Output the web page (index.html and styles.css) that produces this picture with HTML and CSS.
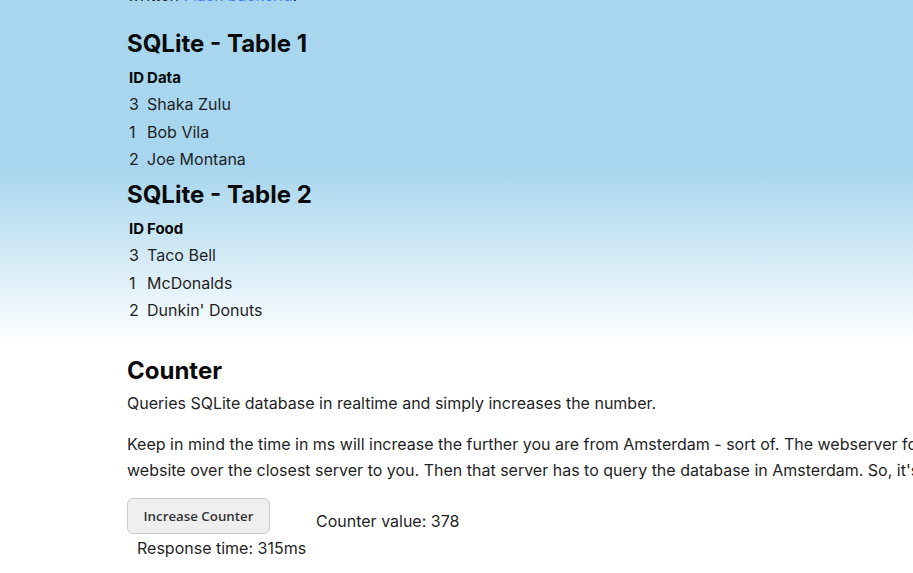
FILE: index.html
```html
<!DOCTYPE html>
<html lang="en">
<head>
<meta charset="utf-8">
<title>SQLite demo</title>
<link rel="stylesheet" href="styles.css">
</head>
<body>
<div class="page">
  <section class="db">
    <p class="intro">written <a href="#" class="link">Flask backend</a>.</p>
    <h2 class="title">SQLite - Table 1</h2>
    <table class="data">
      <thead><tr><th>ID</th><th>Data</th></tr></thead>
      <tbody>
        <tr><td>3</td><td>Shaka Zulu</td></tr>
        <tr><td>1</td><td>Bob Vila</td></tr>
        <tr><td>2</td><td>Joe Montana</td></tr>
      </tbody>
    </table>
    <h2 class="title">SQLite - Table 2</h2>
    <table class="data">
      <thead><tr><th>ID</th><th>Food</th></tr></thead>
      <tbody>
        <tr><td>3</td><td>Taco Bell</td></tr>
        <tr><td>1</td><td>McDonalds</td></tr>
        <tr><td>2</td><td>Dunkin' Donuts</td></tr>
      </tbody>
    </table>
  </section>
  <section class="counter">
    <h2 class="title counter-title">Counter</h2>
    <p class="text">Queries SQLite database in realtime and simply increases the number.</p>
    <p class="text note">Keep in mind the time in ms will increase the further you are from Amsterdam - sort of. The webserver forwards the<br>website over the closest server to you. Then that server has to query the database in Amsterdam. So, it's not that bad.</p>
    <div class="controls">
      <button class="btn" type="button">Increase Counter</button>
      <span class="value">Counter value: 378</span>
    </div>
    <div class="response">Response time: 315ms</div>
  </section>
</div>
</body>
</html>
```
FILE: styles.css
```css
html, body {
  margin: 0;
  padding: 0;
}
body {
  font-family: Inter, "Noto Sans", sans-serif;
  font-size: 16px;
  color: #1f1f1f;
  background-color: #fff;
  background-image: linear-gradient(to bottom, #a8d6ee 0, #a8d6ee 168px, #ffffff 345px);
  background-repeat: no-repeat;
  background-size: 100% 345px;
  overflow: hidden;
  height: 573px;
}
.page {
  padding-left: 127px;
  margin-top: -17px;
  white-space: nowrap;
}
.intro {
  margin: 0 0 22px;
  line-height: 25px;
}
.link {
  color: #3b82f6;
  text-decoration: none;
}
.title {
  font-size: 24px;
  font-weight: 700;
  line-height: 28.8px;
  margin: 6px 0 4px;
  color: #0a0a0a;
}
.data {
  border-spacing: 2px;
}
.data th {
  font-size: 15px;
  font-weight: 700;
  text-align: left;
  padding: 0 1px 0 0;
  line-height: 25.5px;
  color: #0a0a0a;
}
.data td {
  padding: 0 1px 0 0;
  line-height: 25.5px;
}
.counter-title {
  margin: 31px 0 6px;
}
.text {
  margin: 0 0 15px;
  line-height: 25px;
}
.note {
  line-height: 26px;
  margin-bottom: 15px;
}
.controls {
  display: flex;
  align-items: flex-start;
  gap: 46px;
}
.btn {
  font-family: "Open Sans", "Noto Sans", sans-serif;
  font-size: 13.3px;
  font-weight: 600;
  color: #333;
  background: #efefef;
  border: 1px solid #cdcdcd;
  border-radius: 6px;
  height: 36px;
  width: 143px;
  padding: 0;
}
.value {
  margin-top: 11px;
  line-height: 25px;
}
.response {
  padding-left: 10px;
  margin-top: 2px;
  line-height: 25px;
}
```
